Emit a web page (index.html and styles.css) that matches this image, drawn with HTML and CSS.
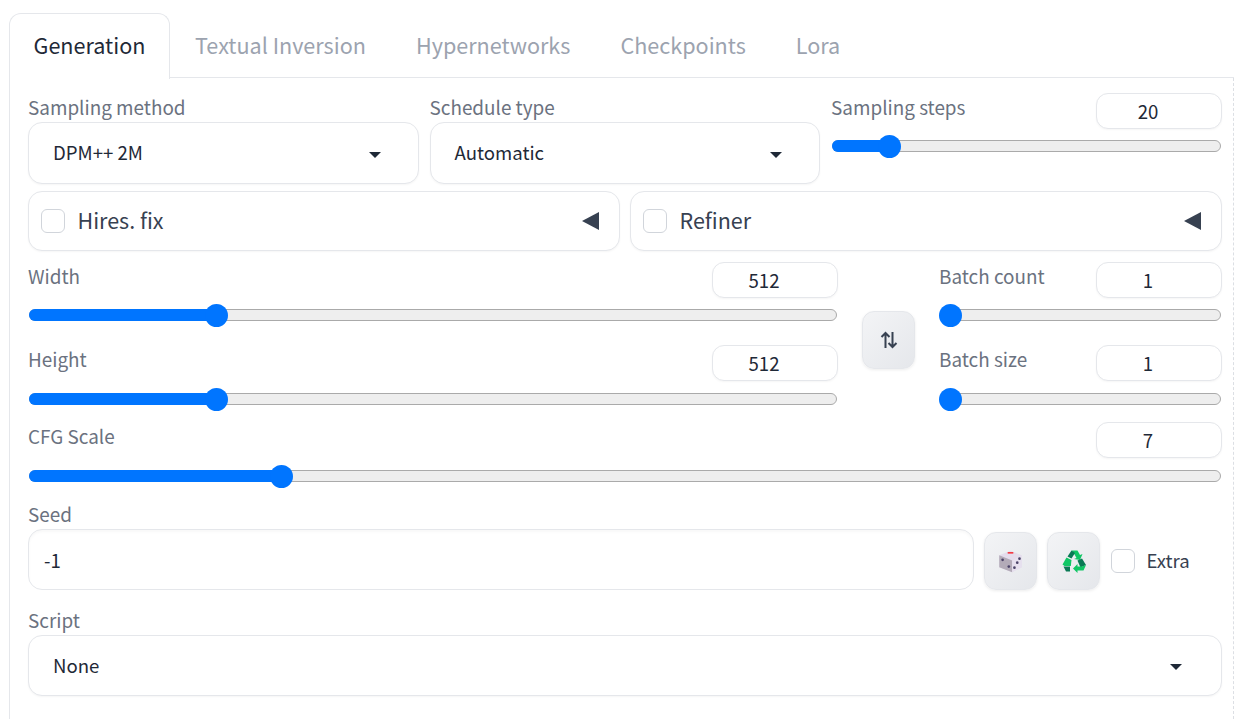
FILE: index.html
```html
<!DOCTYPE html>
<html lang="en">
<head>
    <meta charset="UTF-8">
    <meta name="viewport" content="width=device-width, initial-scale=1.0">
    <title>Generation</title>
    <link rel="stylesheet" href="styles.css">
</head>
<body>
    <div class="tabs">
        <button class="tab selected">Generation</button>
        <button class="tab">Textual Inversion</button>
        <button class="tab">Hypernetworks</button>
        <button class="tab">Checkpoints</button>
        <button class="tab">Lora</button>
    </div>

    <div class="panel">
        <div class="row-sampling">
            <div class="field">
                <span class="label">Sampling method</span>
                <div class="dropdown">
                    <span>DPM++ 2M</span>
                    <svg class="caret" viewBox="0 0 12 6"><path d="M0 0H12L6 6Z"/></svg>
                </div>
            </div>
            <div class="field">
                <span class="label">Schedule type</span>
                <div class="dropdown">
                    <span>Automatic</span>
                    <svg class="caret" viewBox="0 0 12 6"><path d="M0 0H12L6 6Z"/></svg>
                </div>
            </div>
            <div class="slider-block">
                <div class="slider-head">
                    <span class="label">Sampling steps</span>
                    <div class="number">20</div>
                </div>
                <div class="slider"><div class="fill" style="width: 59px"></div></div>
            </div>
        </div>

        <div class="row-accordions">
            <div class="accordion">
                <span class="checkbox"></span>
                <span class="accordion-title">Hires. fix</span>
                <svg class="collapse" viewBox="0 0 17 18"><path d="M0 9L17 0V18Z"/></svg>
            </div>
            <div class="accordion">
                <span class="checkbox"></span>
                <span class="accordion-title">Refiner</span>
                <svg class="collapse" viewBox="0 0 17 18"><path d="M0 9L17 0V18Z"/></svg>
            </div>
        </div>

        <div class="row-size">
            <div class="size-col">
                <div class="slider-block">
                    <div class="slider-head">
                        <span class="label">Width</span>
                        <div class="number">512</div>
                    </div>
                    <div class="slider"><div class="fill" style="width: 189px"></div></div>
                </div>
                <div class="slider-block lower">
                    <div class="slider-head">
                        <span class="label">Height</span>
                        <div class="number">512</div>
                    </div>
                    <div class="slider"><div class="fill" style="width: 189px"></div></div>
                </div>
            </div>
            <button class="tool-btn swap">
                <svg width="18" height="18" viewBox="0 0 18 18" fill="none" stroke="#374151" stroke-width="2">
                    <path d="M5.5 17V2M1.5 6L5.5 2L9.5 6"/>
                    <path d="M12.5 1V16M8.5 12L12.5 16L16.5 12"/>
                </svg>
            </button>
            <div class="batch-col">
                <div class="slider-block">
                    <div class="slider-head">
                        <span class="label">Batch count</span>
                        <div class="number">1</div>
                    </div>
                    <div class="slider"><div class="fill" style="width: 12px"></div></div>
                </div>
                <div class="slider-block lower">
                    <div class="slider-head">
                        <span class="label">Batch size</span>
                        <div class="number">1</div>
                    </div>
                    <div class="slider"><div class="fill" style="width: 12px"></div></div>
                </div>
            </div>
        </div>

        <div class="slider-block cfg">
            <div class="slider-head">
                <span class="label">CFG Scale</span>
                <div class="number">7</div>
            </div>
            <div class="slider"><div class="fill" style="width: 254px"></div></div>
        </div>

        <div class="seed">
            <span class="label">Seed</span>
            <div class="seed-row">
                <div class="textbox">-1</div>
                <button class="tool-btn">
                    <svg width="27" height="27" viewBox="0 0 24 24">
                        <path d="M12 2.5L22 6.5V17L13.5 21.5L2 17V6.5Z" fill="#e4dcec"/>
                        <path d="M2 6.5L13.5 11V21.5L2 17Z" fill="#b3abb8"/>
                        <path d="M13.5 11L22 6.5V17L13.5 21.5Z" fill="#e6e0ee"/>
                        <rect x="9.5" y="3.6" width="5" height="1.4" fill="#f4333c"/>
                        <g fill="#4b4368">
                            <circle cx="5" cy="10.5" r="1.2"/>
                            <circle cx="10.5" cy="16.5" r="1.2"/>
                            <circle cx="20" cy="9.5" r="1.2"/>
                            <circle cx="18" cy="13" r="1.2"/>
                            <circle cx="15.5" cy="17.5" r="1.2"/>
                        </g>
                    </svg>
                </button>
                <button class="tool-btn">
                    <svg width="24" height="24" viewBox="0 0 24 24">
                        <path d="M9.5 1.5H15.5L18 6L20.5 5L18 11L12 10L14.5 9L12 4.5Z" fill="#10c765"/>
                        <path d="M5.5 7.5L9.5 1.5L13 4L9.5 9.5Z" fill="#0a7a55"/>
                        <path d="M4.5 8.5L9.5 11L8.8 17H2.5L0.5 15.5Z" fill="#10c765"/>
                        <path d="M1.5 17.5H8V22.5H4Z" fill="#0a7a55"/>
                        <path d="M15.5 11.5L20 9.5L24 16L18.5 18.5Z" fill="#0a7a55"/>
                        <path d="M24 16L21.5 21.5H15.5V24L11 19.5L15.5 15V17.5H20Z" fill="#10c765"/>
                    </svg>
                </button>
                <div class="extra">
                    <span class="checkbox"></span>
                    <span class="extra-label">Extra</span>
                </div>
            </div>
        </div>

        <div class="script">
            <span class="label">Script</span>
            <div class="dropdown script-dropdown">
                <span>None</span>
                <svg class="caret" viewBox="0 0 12 6"><path d="M0 0H12L6 6Z"/></svg>
            </div>
        </div>
    </div>
</body>
</html>
```

FILE: styles.css
```css
* {
    box-sizing: border-box;
}
body {
    font-family: "Noto Sans CJK SC", "Noto Sans", Arial, sans-serif;
    background-color: #fff;
    color: #1f2937;
    margin: 0;
    padding: 13px 5px 0 9px;
    overflow: hidden;
    height: 719px;
}
button {
    font-family: inherit;
    cursor: pointer;
}

/* tabs */
.tabs {
    display: flex;
    height: 65px;
    border-bottom: 1px solid #e5e7eb;
}
.tab {
    height: 65px;
    padding: 0 24px 3px;
    background: none;
    border: 1px solid transparent;
    border-bottom: none;
    font-size: 21.6px;
    color: #9ca3af;
}
.tab.selected {
    height: 66px;
    width: 161px;
    padding: 0 0 4px;
    background-color: #fff;
    border-color: #e5e7eb;
    border-radius: 12px 12px 0 0;
    color: #1f2937;
}

.panel {
    height: 641px;
    padding: 15px 11px 0 18px;
    border-left: 1px solid #e5e7eb;
    border-right: 1px dashed #dcdfe4;
}

.label {
    display: block;
    padding-bottom: 2px;
    font-size: 18.9px;
    line-height: 27px;
    color: #6b7280;
}

/* dropdowns and text boxes */
.dropdown, .textbox, .accordion, .number {
    background-color: #fff;
    border: 1px solid #e5e7eb;
    box-shadow: 0 1px 2px rgba(0, 0, 0, 0.04);
}
.dropdown {
    display: flex;
    align-items: center;
    justify-content: space-between;
    height: 62px;
    padding: 0 37px 3px 24px;
    border-radius: 14px;
    font-size: 18.6px;
}
.script-dropdown {
    height: 61px;
    padding-right: 39px;
}
.caret {
    width: 12px;
    height: 6px;
    margin-top: 6px;
    fill: #1f2937;
}
.row-sampling {
    display: grid;
    grid-template-columns: repeat(3, 1fr);
    column-gap: 10.6px;
}
.field {
    display: flex;
    flex-direction: column;
    justify-content: flex-end;
}

/* sliders */
.slider-head {
    display: flex;
    justify-content: space-between;
    height: 36px;
}
.number {
    width: 126px;
    height: 36px;
    padding-right: 22px;
    border-radius: 12px;
    font-size: 18.6px;
    line-height: 34px;
    text-align: center;
}
.slider {
    position: relative;
    height: 12px;
    margin: 11px 1px 0;
    background-color: #eee;
    border: 1px solid #aaa;
    border-radius: 6px;
}
.lower .slider, .cfg .slider {
    margin-top: 12px;
}
.fill {
    position: absolute;
    left: -1px;
    top: -1px;
    height: 12px;
    background-color: #0075ff;
    border-radius: 6px 0 0 6px;
}
.fill::after {
    content: "";
    position: absolute;
    right: -10px;
    top: -5.5px;
    width: 23px;
    height: 23px;
    background-color: #0075ff;
    border-radius: 50%;
}

/* accordions */
.row-accordions {
    display: flex;
    gap: 10px;
    margin-top: 7px;
}
.accordion {
    display: flex;
    align-items: center;
    flex: 1;
    height: 60px;
    padding: 0 20px 0 12px;
    border-radius: 14px;
}
.accordion-title {
    flex: 1;
    margin-left: 12.5px;
    padding-bottom: 3px;
    font-size: 21.5px;
    color: #374151;
}
.collapse {
    width: 17px;
    height: 18px;
    fill: #374151;
}
.checkbox {
    flex: none;
    width: 24px;
    height: 24px;
    background-color: #fff;
    border: 1px solid #d1d5db;
    border-radius: 6px;
}

/* width, height and batch */
.row-size {
    display: flex;
    margin-top: 11px;
}
.size-col {
    width: 810px;
}
.batch-col {
    width: 283px;
}
.lower {
    margin-top: 24px;
}
.tool-btn {
    display: flex;
    align-items: center;
    justify-content: center;
    flex: none;
    width: 53px;
    height: 58px;
    padding: 0;
    background: linear-gradient(135deg, #f3f4f6, #e5e7eb);
    border: 1px solid #e5e7eb;
    border-radius: 12px;
    box-shadow: 0 1px 3px rgba(0, 0, 0, 0.08);
}
.swap {
    margin: 49px 24px 0;
}
.cfg {
    margin-top: 17px;
}

/* seed */
.seed {
    margin-top: 18px;
}
.seed-row {
    display: flex;
    align-items: flex-end;
    gap: 10px;
}
.textbox {
    flex: 1;
    height: 61px;
    padding-left: 15px;
    border-radius: 14px;
    box-shadow: inset 0 2px 3px rgba(0, 0, 0, 0.03);
    font-size: 18.6px;
    line-height: 60px;
}
.extra {
    display: flex;
    align-items: center;
    gap: 11.5px;
    width: 111px;
    height: 58px;
    margin-left: 1px;
}
.extra-label {
    padding-bottom: 4px;
    font-size: 18.6px;
    color: #374151;
}

.script {
    margin-top: 16px;
}
```
